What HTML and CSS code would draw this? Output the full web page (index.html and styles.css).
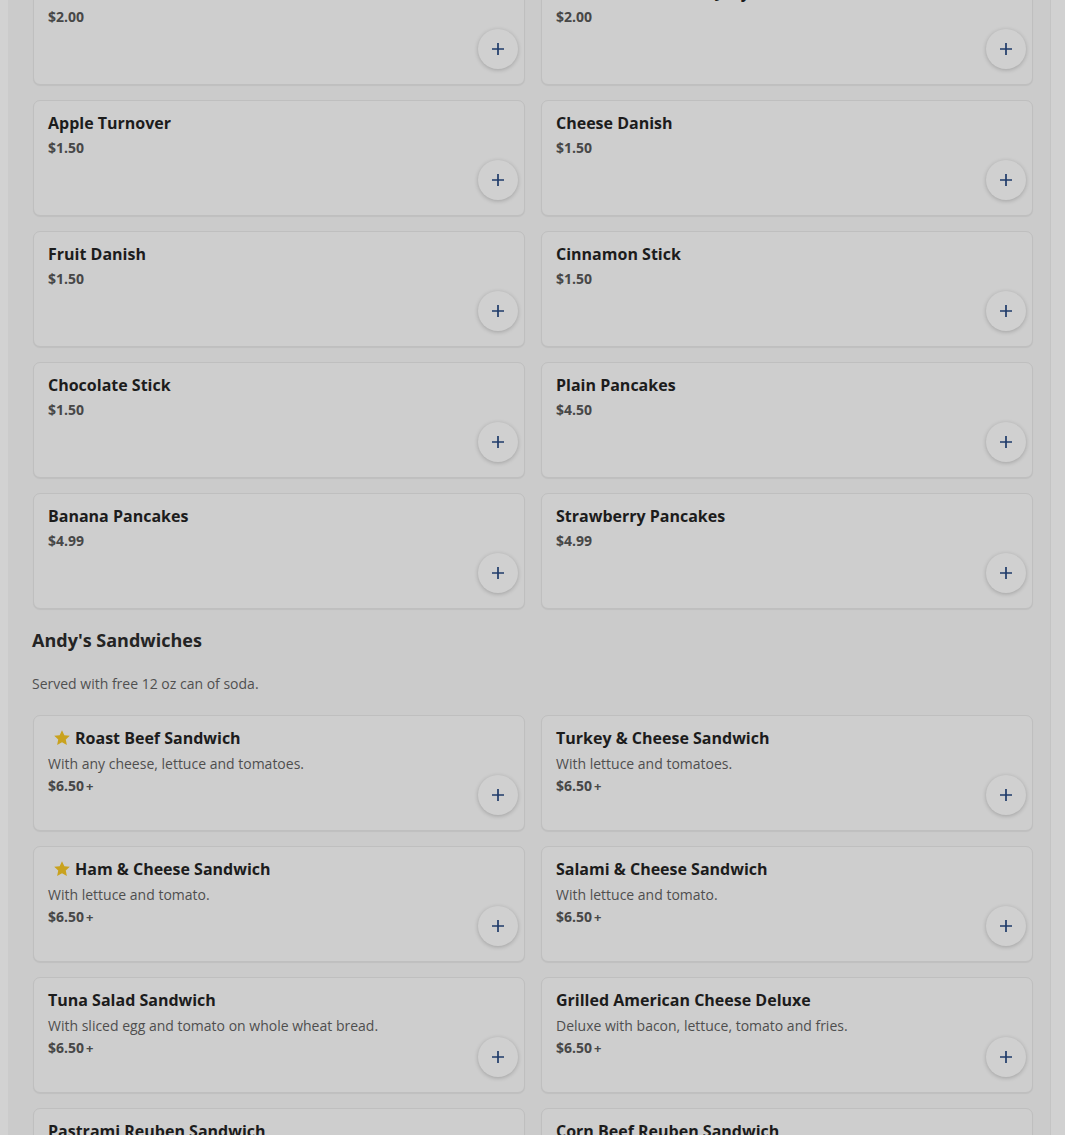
FILE: index.html
```html
<!DOCTYPE html>
<html lang="en">
<head>
<meta charset="utf-8">
<title>Menu</title>
<link rel="stylesheet" href="styles.css">
</head>
<body>
<div class="page">
  <main class="panel">
    <section class="grid grid-first">
      <div class="card"><div class="info"><div class="title">Bran Muffin</div><div class="price">$2.00</div></div><button class="add"><svg viewBox="0 0 16 16" width="16" height="16"><path d="M8 2v12M2 8h12"/></svg></button></div>
      <div class="card"><div class="info"><div class="title">Toast with Butter &amp; Jelly</div><div class="price">$2.00</div></div><button class="add"><svg viewBox="0 0 16 16" width="16" height="16"><path d="M8 2v12M2 8h12"/></svg></button></div>
      <div class="card"><div class="info"><div class="title">Apple Turnover</div><div class="price">$1.50</div></div><button class="add"><svg viewBox="0 0 16 16" width="16" height="16"><path d="M8 2v12M2 8h12"/></svg></button></div>
      <div class="card"><div class="info"><div class="title">Cheese Danish</div><div class="price">$1.50</div></div><button class="add"><svg viewBox="0 0 16 16" width="16" height="16"><path d="M8 2v12M2 8h12"/></svg></button></div>
      <div class="card"><div class="info"><div class="title">Fruit Danish</div><div class="price">$1.50</div></div><button class="add"><svg viewBox="0 0 16 16" width="16" height="16"><path d="M8 2v12M2 8h12"/></svg></button></div>
      <div class="card"><div class="info"><div class="title">Cinnamon Stick</div><div class="price">$1.50</div></div><button class="add"><svg viewBox="0 0 16 16" width="16" height="16"><path d="M8 2v12M2 8h12"/></svg></button></div>
      <div class="card"><div class="info"><div class="title">Chocolate Stick</div><div class="price">$1.50</div></div><button class="add"><svg viewBox="0 0 16 16" width="16" height="16"><path d="M8 2v12M2 8h12"/></svg></button></div>
      <div class="card"><div class="info"><div class="title">Plain Pancakes</div><div class="price">$4.50</div></div><button class="add"><svg viewBox="0 0 16 16" width="16" height="16"><path d="M8 2v12M2 8h12"/></svg></button></div>
      <div class="card"><div class="info"><div class="title">Banana Pancakes</div><div class="price">$4.99</div></div><button class="add"><svg viewBox="0 0 16 16" width="16" height="16"><path d="M8 2v12M2 8h12"/></svg></button></div>
      <div class="card"><div class="info"><div class="title">Strawberry Pancakes</div><div class="price">$4.99</div></div><button class="add"><svg viewBox="0 0 16 16" width="16" height="16"><path d="M8 2v12M2 8h12"/></svg></button></div>
    </section>

    <h2 class="section-title">Andy's Sandwiches</h2>
    <p class="section-desc">Served with free 12 oz can of soda.</p>

    <section class="grid">
      <div class="card"><div class="info"><div class="title"><svg class="star" viewBox="0 0 20 20" width="20" height="20"><path d="M10 2.2l2.35 5.05 5.45.6-4.05 3.7 1.12 5.4L10 14.2l-4.87 2.75 1.12-5.4L2.2 7.85l5.45-.6z"/></svg>Roast Beef Sandwich</div><div class="desc">With any cheese, lettuce and tomatoes.</div><div class="price">$6.50<span class="more">+</span></div></div><button class="add"><svg viewBox="0 0 16 16" width="16" height="16"><path d="M8 2v12M2 8h12"/></svg></button></div>
      <div class="card"><div class="info"><div class="title">Turkey &amp; Cheese Sandwich</div><div class="desc">With lettuce and tomatoes.</div><div class="price">$6.50<span class="more">+</span></div></div><button class="add"><svg viewBox="0 0 16 16" width="16" height="16"><path d="M8 2v12M2 8h12"/></svg></button></div>
      <div class="card"><div class="info"><div class="title"><svg class="star" viewBox="0 0 20 20" width="20" height="20"><path d="M10 2.2l2.35 5.05 5.45.6-4.05 3.7 1.12 5.4L10 14.2l-4.87 2.75 1.12-5.4L2.2 7.85l5.45-.6z"/></svg>Ham &amp; Cheese Sandwich</div><div class="desc">With lettuce and tomato.</div><div class="price">$6.50<span class="more">+</span></div></div><button class="add"><svg viewBox="0 0 16 16" width="16" height="16"><path d="M8 2v12M2 8h12"/></svg></button></div>
      <div class="card"><div class="info"><div class="title">Salami &amp; Cheese Sandwich</div><div class="desc">With lettuce and tomato.</div><div class="price">$6.50<span class="more">+</span></div></div><button class="add"><svg viewBox="0 0 16 16" width="16" height="16"><path d="M8 2v12M2 8h12"/></svg></button></div>
      <div class="card"><div class="info"><div class="title">Tuna Salad Sandwich</div><div class="desc">With sliced egg and tomato on whole wheat bread.</div><div class="price">$6.50<span class="more">+</span></div></div><button class="add"><svg viewBox="0 0 16 16" width="16" height="16"><path d="M8 2v12M2 8h12"/></svg></button></div>
      <div class="card"><div class="info"><div class="title">Grilled American Cheese Deluxe</div><div class="desc">Deluxe with bacon, lettuce, tomato and fries.</div><div class="price">$6.50<span class="more">+</span></div></div><button class="add"><svg viewBox="0 0 16 16" width="16" height="16"><path d="M8 2v12M2 8h12"/></svg></button></div>
      <div class="card"><div class="info"><div class="title">Pastrami Reuben Sandwich</div><div class="desc">With sauerkraut and Swiss cheese on rye.</div><div class="price">$7.50<span class="more">+</span></div></div><button class="add"><svg viewBox="0 0 16 16" width="16" height="16"><path d="M8 2v12M2 8h12"/></svg></button></div>
      <div class="card"><div class="info"><div class="title">Corn Beef Reuben Sandwich</div><div class="desc">With sauerkraut and Swiss cheese on rye.</div><div class="price">$7.50<span class="more">+</span></div></div><button class="add"><svg viewBox="0 0 16 16" width="16" height="16"><path d="M8 2v12M2 8h12"/></svg></button></div>
    </section>
  </main>
  <div class="rail"></div>
</div>
</body>
</html>
```

FILE: styles.css
```css
* { box-sizing: border-box; }

html, body {
  margin: 0;
  padding: 0;
  height: 100%;
  overflow: hidden;
}

body {
  background: #d2d2d2;
  font-family: "Open Sans", "Noto Sans", sans-serif;
  color: #1c1c1c;
}

.page {
  display: flex;
  height: 1135px;
  overflow: hidden;
}

.panel {
  margin-left: 8px;
  width: 1042px;
  flex: none;
  background: #cbcbcb;
  padding: 0 17px 0 25px;
  margin-top: -31px;
}

.rail {
  flex: 1;
  border-left: 1px solid #c4c4c4;
  background: #d1d1d1;
}

.grid {
  display: grid;
  grid-template-columns: 1fr 1fr;
  column-gap: 16px;
  row-gap: 15px;
}

.card {
  height: 116px;
  background: #cecece;
  border: 1px solid #bfbfbf;
  border-radius: 7px;
  box-shadow: 0 1px 1px rgba(0, 0, 0, 0.06);
  display: flex;
  justify-content: space-between;
  padding: 11px 6px 15px 14px;
}

.info {
  display: flex;
  flex-direction: column;
  min-width: 0;
}

.title {
  font-size: 16px;
  line-height: 22px;
  font-weight: 700;
  color: #1c1c1c;
  display: flex;
  align-items: center;
  white-space: nowrap;
}

.star {
  fill: #c9a21e;
  margin: 0 3px 0 4px;
  flex: none;
}

.desc {
  margin-top: 5px;
  font-size: 14px;
  line-height: 20px;
  color: #4e4e4e;
}

.price {
  margin-top: 2px;
  font-size: 14px;
  line-height: 20px;
  font-weight: 700;
  color: #474747;
  display: flex;
  align-items: center;
}

.title + .price {
  margin-top: 4px;
}

.more {
  font-size: 13px;
  font-weight: 700;
  margin-left: 2px;
  color: #4a4a4a;
}

.add {
  align-self: flex-end;
  flex: none;
  width: 40px;
  height: 40px;
  border-radius: 50%;
  border: none;
  background: #d0d0d0;
  box-shadow: 0 1px 4px rgba(0, 0, 0, 0.22);
  display: flex;
  align-items: center;
  justify-content: center;
  padding: 0;
}

.add svg path {
  stroke: #1f3b6a;
  stroke-width: 1.7;
  fill: none;
}

.section-title {
  margin: 19px 0 0 -1px;
  font-size: 18px;
  line-height: 24px;
  font-weight: 700;
  color: #242424;
}

.section-desc {
  margin: 22px 0 21px -1px;
  font-size: 14px;
  line-height: 20px;
  color: #505050;
}
```
